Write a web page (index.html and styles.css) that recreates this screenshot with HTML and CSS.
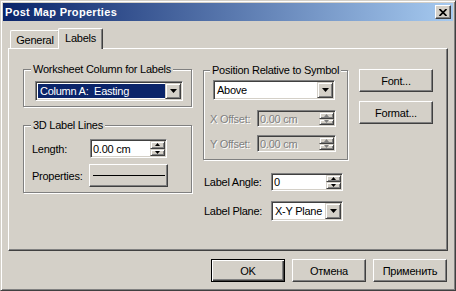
FILE: index.html
```html
<!DOCTYPE html>
<html lang="en">
<head>
  <meta charset="UTF-8">
  <title>Post Map Properties</title>
  <link rel="stylesheet" href="styles.css">
</head>
<body>
  <div class="window">
    <div class="titlebar">
      <span class="title">Post Map Properties</span>
      <span class="close-btn">
        <svg width="8" height="7" viewBox="0 0 8 7"><path d="M0.5,0 L7.5,7 M7.5,0 L0.5,7" stroke="#000" stroke-width="1.7"/></svg>
      </span>
    </div>

    <div class="client">
      <div class="tabs">
        <div class="tab tab-general">General</div>
        <div class="tab tab-labels active">Labels</div>
      </div>

      <div class="panel">
        <div class="col col-left">
          <div class="group group-column">
            <div class="group-title">Worksheet Column for Labels</div>
            <div class="field combo combo-column">
              <div class="combo-text"><span class="selected">Column A:&nbsp; Easting</span></div>
              <div class="drop-btn"><svg width="7" height="4" viewBox="0 0 7 4"><polygon points="0,0 7,0 3.5,4" fill="#000"/></svg></div>
            </div>
          </div>

          <div class="group group-lines">
            <div class="group-title">3D Label Lines</div>
            <div class="row row-length">
              <span class="row-label">Length:</span>
              <div class="field spin-edit edit-length">
                <div class="edit-text">0.00 cm</div>
                <div class="spin">
                  <div class="spin-btn"><svg width="5" height="3" viewBox="0 0 5 3"><polygon points="0,3 5,3 2.5,0" fill="#000"/></svg></div>
                  <div class="spin-btn"><svg width="5" height="3" viewBox="0 0 5 3"><polygon points="0,0 5,0 2.5,3" fill="#000"/></svg></div>
                </div>
              </div>
            </div>
            <div class="row row-props">
              <span class="row-label">Properties:</span>
              <div class="button line-btn"><span class="line-sample"></span></div>
            </div>
          </div>
        </div>

        <div class="col col-middle">
          <div class="group group-position">
            <div class="group-title">Position Relative to Symbol</div>
            <div class="field combo combo-above">
              <div class="combo-text">Above</div>
              <div class="drop-btn"><svg width="7" height="4" viewBox="0 0 7 4"><polygon points="0,0 7,0 3.5,4" fill="#000"/></svg></div>
            </div>
            <div class="row row-offset row-x">
              <span class="row-label disabled">X Offset:</span>
              <div class="field spin-edit edit-offset off">
                <div class="edit-text disabled">0.00 cm</div>
                <div class="spin">
                  <div class="spin-btn"><svg width="5" height="3" viewBox="0 0 5 3"><polygon points="0,3 5,3 2.5,0" fill="#808080"/></svg></div>
                  <div class="spin-btn"><svg width="5" height="3" viewBox="0 0 5 3"><polygon points="0,0 5,0 2.5,3" fill="#808080"/></svg></div>
                </div>
              </div>
            </div>
            <div class="row row-offset row-y">
              <span class="row-label disabled">Y Offset:</span>
              <div class="field spin-edit edit-offset off">
                <div class="edit-text disabled">0.00 cm</div>
                <div class="spin">
                  <div class="spin-btn"><svg width="5" height="3" viewBox="0 0 5 3"><polygon points="0,3 5,3 2.5,0" fill="#808080"/></svg></div>
                  <div class="spin-btn"><svg width="5" height="3" viewBox="0 0 5 3"><polygon points="0,0 5,0 2.5,3" fill="#808080"/></svg></div>
                </div>
              </div>
            </div>
          </div>

          <div class="row row-angle">
            <span class="row-label">Label Angle:</span>
            <div class="field spin-edit edit-angle">
              <div class="edit-text">0</div>
              <div class="spin">
                <div class="spin-btn"><svg width="5" height="3" viewBox="0 0 5 3"><polygon points="0,3 5,3 2.5,0" fill="#000"/></svg></div>
                <div class="spin-btn"><svg width="5" height="3" viewBox="0 0 5 3"><polygon points="0,0 5,0 2.5,3" fill="#000"/></svg></div>
              </div>
            </div>
          </div>
          <div class="row row-plane">
            <span class="row-label">Label Plane:</span>
            <div class="field combo combo-plane">
              <div class="combo-text">X-Y Plane</div>
              <div class="drop-btn"><svg width="7" height="4" viewBox="0 0 7 4"><polygon points="0,0 7,0 3.5,4" fill="#000"/></svg></div>
            </div>
          </div>
        </div>

        <div class="col col-right">
          <div class="button side-btn">Font...</div>
          <div class="button side-btn format-btn">Format...</div>
        </div>
      </div>

      <div class="footer">
        <div class="button footer-btn default">OK</div>
        <div class="button footer-btn">Отмена</div>
        <div class="button footer-btn">Применить</div>
      </div>
    </div>
  </div>
</body>
</html>
```

FILE: styles.css
```css
body {
  margin: 0;
  background: #d4d0c8;
  font-family: 'Liberation Sans', Arial, sans-serif;
  font-size: 11px;
  letter-spacing: -0.25px;
  color: #000;
}
.window {
  box-sizing: border-box;
  width: 456px;
  height: 291px;
  padding: 2px;
  background: #d4d0c8;
  border: 1px solid;
  border-color: #d4d0c8 #404040 #404040 #d4d0c8;
  box-shadow: inset 1px 1px #fff, inset -1px -1px #808080;
}
.titlebar {
  height: 18px;
  display: flex;
  align-items: center;
  justify-content: space-between;
  padding-left: 2px;
  background: linear-gradient(to right, #0a246a, #a6caf0);
  color: #fff;
}
.title {
  font-weight: bold;
  letter-spacing: 0.3px;
}
.close-btn {
  box-sizing: border-box;
  width: 16px;
  height: 14px;
  margin-right: 2px;
  display: flex;
  align-items: center;
  justify-content: center;
  background: #d4d0c8;
  border: 1px solid;
  border-color: #fff #404040 #404040 #fff;
  box-shadow: inset -1px -1px #808080;
}
.client {
  padding: 7px 5px 0 5px;
}

/* tabs */
.tabs {
  height: 20px;
  display: flex;
  align-items: flex-end;
  padding-left: 2px;
}
.tab {
  box-sizing: border-box;
  height: 18px;
  padding-top: 3px;
  line-height: 13px;
  text-align: center;
  background: #d4d0c8;
  border-left: 1px solid #fff;
  border-top: 1px solid #fff;
  border-right: 1px solid #404040;
  border-radius: 2px 2px 0 0;
  box-shadow: inset -1px 0 #808080;
}
.tab-general {
  width: 50px;
}
.tab.active {
  position: relative;
  z-index: 1;
  width: 45px;
  height: 21px;
  margin: 0 -2px -1px -2px;
  padding-top: 3px;
}

/* tab page */
.panel {
  box-sizing: border-box;
  height: 203px;
  display: flex;
  align-items: flex-start;
  padding: 20px 0 0 14px;
  border: 1px solid;
  border-color: #fff #404040 #404040 #fff;
  box-shadow: inset -1px -1px #808080;
}
.col-left {
  width: 169px;
}
.col-middle {
  width: 145px;
  margin-left: 11px;
}
.col-right {
  width: 74px;
  margin-left: 11px;
}

.group {
  box-sizing: border-box;
  border: 1px solid #808080;
  box-shadow: 1px 1px #fff, inset 1px 1px #fff;
}
.group-title {
  width: fit-content;
  margin-top: -7px;
  padding: 0 2px;
  line-height: 13px;
  background: #d4d0c8;
}
.group-column {
  height: 38px;
  padding-left: 11px;
}
.group-column .group-title {
  margin-left: -4px;
}
.group-lines {
  height: 68px;
  margin-top: 18px;
  padding-left: 8px;
}
.group-lines .group-title {
  margin-left: -1px;
}
.group-position {
  height: 90px;
  margin-top: 1px;
  padding-left: 6px;
}

/* fields */
.field {
  box-sizing: border-box;
  display: flex;
  padding: 1px;
  background: #fff;
  border: 1px solid;
  border-color: #808080 #fff #fff #808080;
  box-shadow: inset 1px 1px #404040, inset -1px -1px #d4d0c8;
}
.field.off {
  background: #d4d0c8;
}
.combo-text,
.edit-text {
  flex: 1;
  display: flex;
  align-items: center;
  padding-left: 1px;
  white-space: nowrap;
  overflow: hidden;
}
.combo-text {
  padding-left: 2px;
}
.selected {
  align-self: stretch;
  flex: 1;
  display: flex;
  align-items: center;
  margin: 1px 0 1px -1px;
  padding-left: 2px;
  background: #0a246a;
  color: #fff;
}
.drop-btn,
.spin-btn {
  box-sizing: border-box;
  display: flex;
  align-items: center;
  justify-content: center;
  background: #d4d0c8;
  border: 1px solid;
  border-color: #d4d0c8 #404040 #404040 #d4d0c8;
  box-shadow: inset 1px 1px #fff, inset -1px -1px #808080;
}
.drop-btn {
  width: 16px;
}
.spin {
  width: 15px;
  display: flex;
  flex-direction: column;
}
.spin-btn {
  flex: 1;
}
.disabled {
  color: #808080;
  text-shadow: 1px 1px #fff;
}

.combo-column {
  width: 148px;
  height: 20px;
  margin-top: 5px;
}
.combo-above {
  width: 122px;
  height: 20px;
  margin: 3px 0 0 3px;
}

.row {
  display: flex;
  align-items: center;
}
.row-length {
  margin-top: 7px;
}
.row-length .row-label,
.row-props .row-label {
  width: 58px;
}
.edit-length {
  width: 77px;
  height: 19px;
}
.row-props {
  margin-top: 6px;
}
.line-btn {
  width: 79px;
  height: 23px;
  margin-left: -1px;
}
.line-sample {
  width: 72px;
  height: 1px;
  background: #000;
}

.row-x {
  margin-top: 10px;
}
.row-y {
  margin-top: 8px;
}
.row-offset .row-label {
  width: 47px;
}
.edit-offset {
  width: 79px;
  height: 17px;
}

.row-angle {
  margin-top: 13px;
  padding-left: 1px;
}
.row-plane {
  margin-top: 10px;
  padding-left: 1px;
}
.row-angle .row-label,
.row-plane .row-label {
  width: 67px;
}
.edit-angle {
  width: 72px;
  height: 18px;
}
.combo-plane {
  width: 72px;
  height: 20px;
}

/* push buttons */
.button {
  box-sizing: border-box;
  display: flex;
  align-items: center;
  justify-content: center;
  background: #d4d0c8;
  border: 1px solid;
  border-color: #fff #404040 #404040 #fff;
  box-shadow: inset -1px -1px #808080;
}
.side-btn {
  width: 74px;
  height: 23px;
}
.format-btn {
  margin-top: 9px;
}
.footer {
  display: flex;
  justify-content: flex-end;
  gap: 7px;
  margin-top: 8px;
  padding-right: 1px;
}
.footer-btn {
  width: 74px;
  height: 23px;
}
.footer-btn.default {
  border: 1px solid #000;
  box-shadow: inset 1px 1px #fff, inset -1px -1px #404040, inset -2px -2px #808080;
}
```
